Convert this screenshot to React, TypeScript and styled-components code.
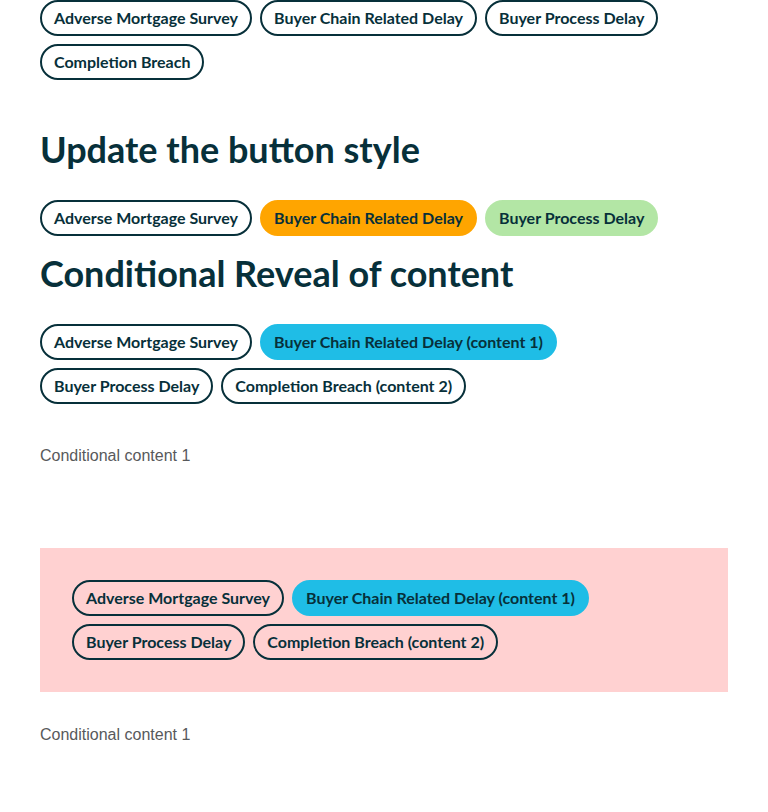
import React from "react";
import styled, { createGlobalStyle } from "styled-components";

const Global = createGlobalStyle`
  html, body { margin: 0; padding: 0; background: #ffffff; }
  body { font-family: "Lato", "Liberation Sans", sans-serif; color: #07303a; }
`;

const Page = styled.div`
  padding: 0 40px 40px;
  display: flex;
  flex-direction: column;
`;

const ChipGroup = styled.div`
  display: flex;
  flex-wrap: wrap;
  gap: 8px;
`;

type Variant = "outline" | "orange" | "green" | "blue";

const bg: Record<Variant, string> = {
  outline: "transparent",
  orange: "#ffa500",
  green: "#b3e6a5",
  blue: "#1fbde6",
};

const Chip = styled.button<{ $v: Variant }>`
  box-sizing: border-box;
  height: 36px;
  padding: 0 12px;
  border-radius: 18px;
  border: 2px solid ${(p) => (p.$v === "outline" ? "#07303a" : bg[p.$v])};
  background: ${(p) => bg[p.$v]};
  color: #07303a;
  font-family: "Lato", "Liberation Sans", sans-serif;
  font-weight: 700;
  font-size: 16px;
  line-height: 1;
  display: inline-flex;
  align-items: center;
  cursor: pointer;
`;

const Heading = styled.h2<{ $mt: number; $mb: number }>`
  margin: ${(p) => p.$mt}px 0 ${(p) => p.$mb}px;
  font-family: "Lato", "Liberation Sans", sans-serif;
  font-weight: 700;
  font-size: 36px;
  line-height: 40px;
  color: #07303a;
`;

const Reveal = styled.p<{ $mt: number }>`
  margin: ${(p) => p.$mt}px 0 0;
  font-family: "Liberation Sans", Arial, sans-serif;
  font-size: 16px;
  line-height: 18px;
  color: #58595b;
`;

const PinkBox = styled.div`
  margin-top: 83px;
  background: #ffd1d1;
  padding: 32px;
`;

const App: React.FC = () => (
  <>
    <Global />
    <Page>
      <ChipGroup>
        <Chip $v="outline">Adverse Mortgage Survey</Chip>
        <Chip $v="outline">Buyer Chain Related Delay</Chip>
        <Chip $v="outline">Buyer Process Delay</Chip>
        <Chip $v="outline">Completion Breach</Chip>
      </ChipGroup>
      <Heading $mt={49} $mb={31}>Update the button style</Heading>
      <ChipGroup>
        <Chip $v="outline">Adverse Mortgage Survey</Chip>
        <Chip $v="orange">Buyer Chain Related Delay</Chip>
        <Chip $v="green">Buyer Process Delay</Chip>
      </ChipGroup>
      <Heading $mt={17} $mb={31}>Conditional Reveal of content</Heading>
      <ChipGroup>
        <Chip $v="outline">Adverse Mortgage Survey</Chip>
        <Chip $v="blue">Buyer Chain Related Delay (content 1)</Chip>
        <Chip $v="outline">Buyer Process Delay</Chip>
        <Chip $v="outline">Completion Breach (content 2)</Chip>
      </ChipGroup>
      <Reveal $mt={43}>Conditional content 1</Reveal>
      <PinkBox>
        <ChipGroup>
          <Chip $v="outline">Adverse Mortgage Survey</Chip>
          <Chip $v="blue">Buyer Chain Related Delay (content 1)</Chip>
          <Chip $v="outline">Buyer Process Delay</Chip>
          <Chip $v="outline">Completion Breach (content 2)</Chip>
        </ChipGroup>
      </PinkBox>
      <Reveal $mt={34}>Conditional content 1</Reveal>
    </Page>
  </>
);

export default App;
